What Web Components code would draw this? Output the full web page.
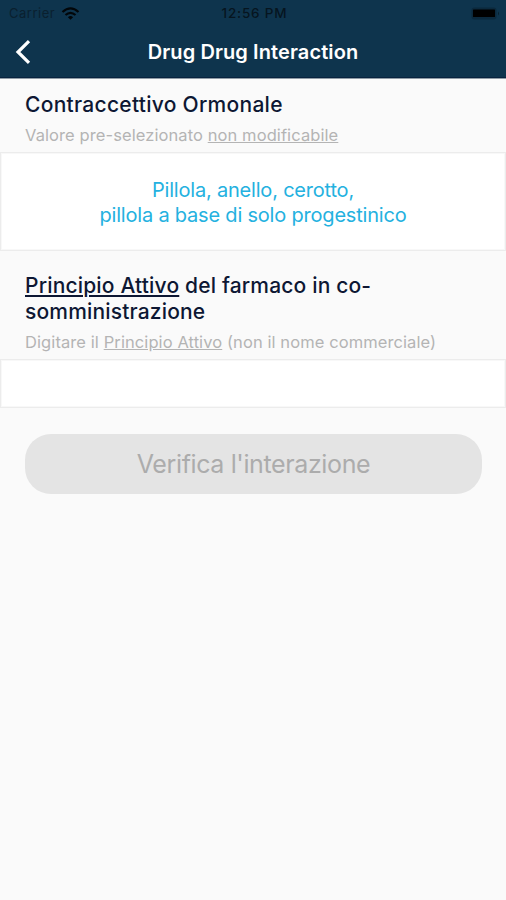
<!DOCTYPE html>
<html lang="it">
<head>
<meta charset="utf-8">
<title>Drug Drug Interaction</title>
<style>
  body {
    margin: 0;
    background: #fafafa;
    font-family: Inter, Roboto, "Liberation Sans", sans-serif;
  }
</style>
</head>
<body>
<ddi-app>
  <status-bar carrier="Carrier" time="12:56 PM"></status-bar>
  <nav-bar>Drug Drug Interaction</nav-bar>

  <form-section>
    <span slot="title">Contraccettivo Ormonale</span>
    <span slot="hint">Valore pre-selezionato <u>non modificabile</u></span>
    <value-box>Pillola, anello, cerotto,<br>pillola a base di solo progestinico</value-box>
  </form-section>

  <form-section style="--head-top: 22px; --title-spacing: 0.17px">
    <span slot="title"><u>Principio Attivo</u> del farmaco in co-<br>somministrazione</span>
    <span slot="hint">Digitare il <u>Principio Attivo</u> (non il nome commerciale)</span>
    <value-box style="--box-height: 49px"></value-box>
  </form-section>

  <pill-button>Verifica l'interazione</pill-button>
</ddi-app>

<script>
class DdiApp extends HTMLElement {
  constructor() {
    super();
    this.attachShadow({ mode: "open" }).innerHTML = `
      <style>
        :host {
          display: flex;
          flex-direction: column;
          min-height: 100vh;
          background: #fafafa;
        }
      </style>
      <slot></slot>
    `;
  }
}

class StatusBar extends HTMLElement {
  constructor() {
    super();
    this.attachShadow({ mode: "open" });
  }

  connectedCallback() {
    this.shadowRoot.innerHTML = `
      <style>
        :host {
          display: grid;
          grid-template-columns: 1fr auto 1fr;
          align-items: center;
          height: 26px;
          padding: 0 6px 0 9px;
          box-sizing: border-box;
          background: #0e344d;
          color: #06151f;
          font-size: 13px;
          line-height: 26px;
        }
        .left { display: flex; align-items: center; gap: 6px; color: #0a202f; letter-spacing: 0.5px; }
        .time { font-size: 13.5px; font-weight: 500; letter-spacing: 0.8px; }
        .battery { justify-self: end; }
        svg { display: block; }
      </style>
      <div class="left">
        <span>${this.getAttribute("carrier")}</span>
        <svg width="19" height="13" viewBox="0 0 18 13" fill="none" stroke="#020609" stroke-width="2.2">
          <path d="M1 5 Q9 -2.4 17 5"/>
          <path d="M4 8 Q9 3.6 14 8"/>
          <path d="M6.4 10.2 Q9 8 11.6 10.2 L9 12.8Z" fill="#020609" stroke="none"/>
        </svg>
      </div>
      <div class="time">${this.getAttribute("time")}</div>
      <svg class="battery" width="29" height="13" viewBox="0 0 29 13">
        <rect x="0.5" y="0.5" width="25" height="12" rx="3" fill="#0b293d"/>
        <rect x="2" y="2.5" width="22" height="7.5" rx="0.5" fill="#000"/>
        <path d="M27 4.5 q2 2 0 4z" fill="#08202f"/>
      </svg>
    `;
  }
}

class NavBar extends HTMLElement {
  constructor() {
    super();
    this.attachShadow({ mode: "open" }).innerHTML = `
      <style>
        :host {
          display: grid;
          grid-template-columns: 48px 1fr 48px;
          align-items: center;
          height: 53px;
          box-sizing: border-box;
          border-bottom: 1px solid #8f9ca6;
          background: #0e344d;
          color: #fff;
          box-shadow: inset 0 -1px #08233f;
        }
        svg { display: block; margin-left: 14px; }
        .title {
          text-align: center;
          font-size: 20px;
          font-weight: 600;
          letter-spacing: 0.1px;
          white-space: nowrap;
        }
      </style>
      <svg width="18" height="26" viewBox="0 0 18 26" fill="none" stroke="#fff" stroke-width="3.2">
        <path d="M15 2.2 L4 13 L15 23.8"/>
      </svg>
      <div class="title"><slot></slot></div>
    `;
  }
}

class FormSection extends HTMLElement {
  constructor() {
    super();
    this.attachShadow({ mode: "open" }).innerHTML = `
      <style>
        :host { display: block; }
        .head { padding: var(--head-top, 13px) 25px 6px; }
        .title {
          color: #0d1733;
          font-size: 21px;
          font-weight: 500;
          line-height: 26px;
          letter-spacing: var(--title-spacing, 0.28px);
          white-space: nowrap;
        }
        .hint {
          margin-top: 6px;
          color: #b4b4b4;
          font-size: 16.5px;
          line-height: 22px;
          letter-spacing: 0.09px;
          white-space: nowrap;
        }
      </style>
      <div class="head">
        <div class="title"><slot name="title"></slot></div>
        <div class="hint"><slot name="hint"></slot></div>
      </div>
      <slot></slot>
    `;
  }
}

class ValueBox extends HTMLElement {
  constructor() {
    super();
    this.attachShadow({ mode: "open" }).innerHTML = `
      <style>
        :host {
          display: flex;
          align-items: center;
          justify-content: center;
          height: var(--box-height, 99px);
          padding-top: 2px;
          box-sizing: border-box;
          border: 1px solid #ececec;
          box-shadow: inset 0 0 0 1px #f8f8f8;
          background: #fff;
          color: #24b1e0;
          font-size: 20px;
          line-height: 25px;
          letter-spacing: -0.2px;
          text-align: center;
        }
      </style>
      <div><slot></slot></div>
    `;
  }
}

class PillButton extends HTMLElement {
  constructor() {
    super();
    this.attachShadow({ mode: "open" }).innerHTML = `
      <style>
        :host { display: block; padding: 26px 24px 0 25px; }
        button {
          display: block;
          width: 100%;
          height: 60px;
          padding: 0;
          border: 0;
          border-radius: 26px;
          background: #e4e4e4;
          color: #acacac;
          font: inherit;
          font-size: 25px;
          letter-spacing: -0.38px;
        }
      </style>
      <button disabled><slot></slot></button>
    `;
  }
}

customElements.define("ddi-app", DdiApp);
customElements.define("status-bar", StatusBar);
customElements.define("nav-bar", NavBar);
customElements.define("form-section", FormSection);
customElements.define("value-box", ValueBox);
customElements.define("pill-button", PillButton);
</script>
</body>
</html>
